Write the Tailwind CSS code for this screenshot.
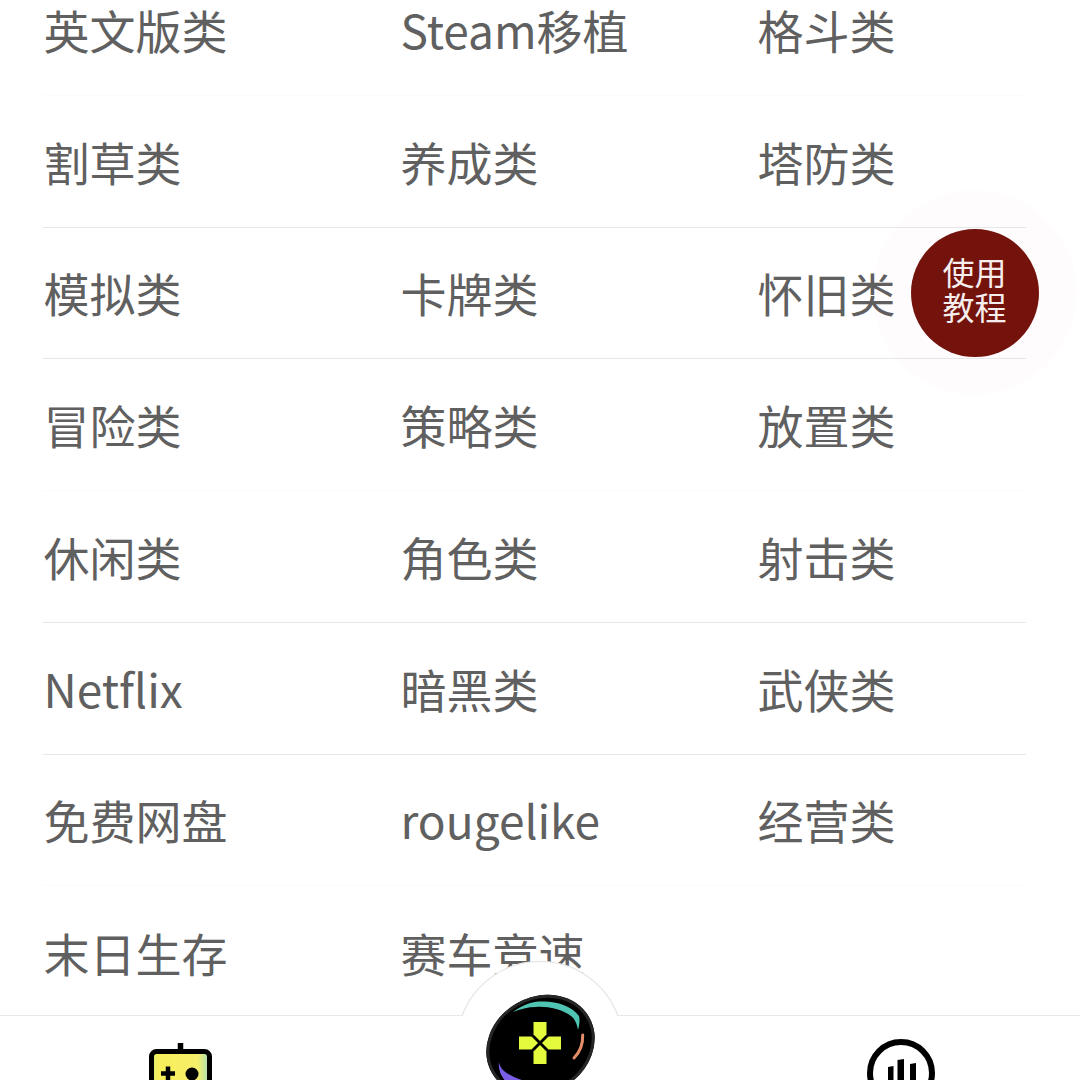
<!DOCTYPE html>
<html lang="zh">
<head>
<meta charset="utf-8">
<script src="https://cdn.jsdelivr.net/npm/@tailwindcss/browser@4"></script>
</head>
<body class="bg-white">
<div class="relative h-[1080px] w-[1080px] overflow-hidden bg-white font-['Noto_Sans_CJK_SC','Noto_Sans',sans-serif] text-[46px] text-[#606060]">
  <div class="-mt-[36px] ml-[43px] grid w-[983px] grid-cols-[357px_357px_269px] auto-rows-[131.75px] [&>div]:flex [&>div]:items-center [&>div]:pl-[0.5px]">
    <div class="border-b border-[#fbfbfb]">英文版类</div><div class="border-b border-[#fbfbfb]">Steam移植</div><div class="border-b border-[#fbfbfb]">格斗类</div>
    <div class="border-b border-[#e8e8e8]">割草类</div><div class="border-b border-[#e8e8e8]">养成类</div><div class="border-b border-[#e8e8e8]">塔防类</div>
    <div class="border-b border-[#e8e8e8]">模拟类</div><div class="border-b border-[#e8e8e8]">卡牌类</div><div class="border-b border-[#e8e8e8]">怀旧类</div>
    <div class="border-b border-[#fbfbfb]">冒险类</div><div class="border-b border-[#fbfbfb]">策略类</div><div class="border-b border-[#fbfbfb]">放置类</div>
    <div class="border-b border-[#e8e8e8]">休闲类</div><div class="border-b border-[#e8e8e8]">角色类</div><div class="border-b border-[#e8e8e8]">射击类</div>
    <div class="border-b border-[#e8e8e8]">Netflix</div><div class="border-b border-[#e8e8e8]">暗黑类</div><div class="border-b border-[#e8e8e8]">武侠类</div>
    <div class="border-b border-[#fbfbfb]">免费网盘</div><div class="border-b border-[#fbfbfb]">rougelike</div><div class="border-b border-[#fbfbfb]">经营类</div>
    <div>末日生存</div><div>赛车竞速</div><div></div>
  </div>

  <!-- floating tutorial button -->
  <div class="absolute left-[872px] top-[190px] flex h-[205px] w-[205px] items-center justify-center rounded-full bg-[#e8176a]/[0.012]">
    <div class="flex h-[128px] w-[128px] flex-col items-center justify-center rounded-full bg-[#74130b] pb-[7px] text-[32px] leading-[35px] text-[#f6eeee]">
      <span>使用</span><span>教程</span>
    </div>
  </div>

  <!-- bottom navigation -->
  <div class="absolute bottom-0 left-0 h-[65px] w-[1080px] border-t border-[#e8e8e8] bg-white">
    <svg class="absolute left-[450px] -top-[60px]" width="180" height="125" viewBox="0 0 180 125" fill="none">
      <path d="M12 60 A83 83 0 0 1 168 60 L168 125 L12 125 Z" fill="#fff"/>
      <path d="M12 60 A83 83 0 0 1 168 60" stroke="#e6e6e6" stroke-width="1.2"/>
    </svg>

    <!-- left game-console icon -->
    <svg class="absolute left-[145px] top-[25px]" width="72" height="40" viewBox="0 0 72 40" fill="none">
      <defs><linearGradient id="g1" x1="0" y1="0" x2="1" y2="0"><stop offset="0" stop-color="#d8ee7a"/><stop offset=".12" stop-color="#f7ee5a"/><stop offset=".8" stop-color="#f7ee6a"/><stop offset="1" stop-color="#9fdfc0"/></linearGradient></defs>
      <path d="M35.500 2 V10" stroke="#000" stroke-width="5.500"/>
      <rect x="6.500" y="10.500" width="58" height="50" rx="5" fill="url(#g1)" stroke="#000" stroke-width="5"/>
      <path d="M16 32.500 H30 M23 25.500 V39.500" stroke="#000" stroke-width="4.500"/>
      <circle cx="47" cy="33" r="6.500" fill="#000"/>
    </svg>

    <!-- center logo -->
    <svg class="absolute left-[484px] -top-[24px]" width="112" height="89" viewBox="0 0 112 89" fill="none">
      <g transform="translate(56.500 53) rotate(-30)">
        <ellipse rx="56" ry="48" fill="#000"/>
        <ellipse rx="54.500" ry="46.500" stroke="#262626" stroke-width="3"/>
      </g>
      <path d="M29 20 C40 12 48 9.500 58 9.500 C72 9 88 14 95 24 C96 28 95.500 33 94 38 C93 32 91 27 87 24 C78 17 62 14 52 15 C44 15 36 17 29 20 Z" fill="#4fc4b2"/>
      <path d="M98.700 43 C99 52 96 60 90 66" stroke="#e58c68" stroke-width="3" stroke-linecap="round"/>
      <path d="M15 70 C16 78 24 84 44 90 L22 90 C17 84 14 78 15 70 Z" fill="#7a5fe6"/>
      <g transform="translate(56 51)" fill="#e3fb3c">
        <path d="M-6.500 -21 H6.500 V-8.500 L0 -2 L-6.500 -8.500 Z"/>
        <path d="M-6.500 21 H6.500 V8.500 L0 2 L-6.500 8.500 Z"/>
        <path d="M-21 -6.500 V6.500 H-8.500 L-2 0 L-8.500 -6.500 Z"/>
        <path d="M21 -6.500 V6.500 H8.500 L2 0 L8.500 -6.500 Z"/>
      </g>
    </svg>

    <!-- right chart icon -->
    <svg class="absolute left-[865px] top-[22px]" width="72" height="43" viewBox="0 0 72 43" fill="none">
      <circle cx="36" cy="35" r="31" stroke="#000" stroke-width="6"/>
      <path d="M23 29 L28.500 28 V43 H23 Z M32.500 22 L39 21 V43 H32.500 Z M45 26 L51 25 V43 H45 Z" fill="#000"/>
    </svg>
  </div>
</div>
</body>
</html>
